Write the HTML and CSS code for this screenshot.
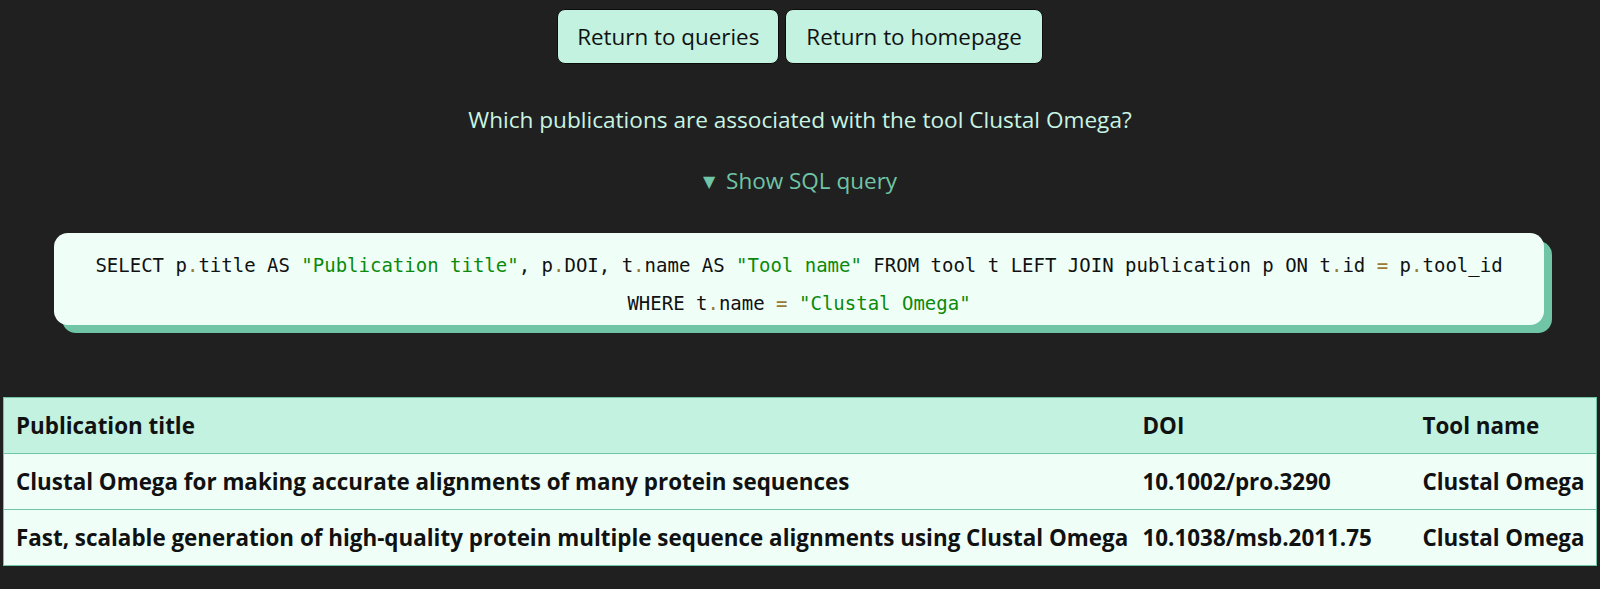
FILE: index.html
```html
<!DOCTYPE html>
<html lang="en">
<head>
<meta charset="utf-8">
<title>Query result</title>
<link rel="stylesheet" href="styles.css">
</head>
<body>
<main class="page">
  <nav class="actions">
    <button class="btn" type="button">Return to queries</button>
    <button class="btn" type="button">Return to homepage</button>
  </nav>
  <p class="question">Which publications are associated with the tool Clustal Omega?</p>
  <div class="toggle"><span class="tri">&#9660;</span> Show SQL query</div>
  <div class="sql">SELECT p<span class="op">.</span>title AS <span class="str">"Publication title"</span>, p<span class="op">.</span>DOI, t<span class="op">.</span>name AS <span class="str">"Tool name"</span> FROM tool t LEFT JOIN publication p ON t<span class="op">.</span>id <span class="op">=</span> p<span class="op">.</span>tool_id WHERE t<span class="op">.</span>name <span class="op">=</span> <span class="str">"Clustal Omega"</span></div>
  <div class="result">
    <table class="grid">
      <thead>
        <tr><th class="c-title">Publication title</th><th class="c-doi">DOI</th><th class="c-tool">Tool name</th></tr>
      </thead>
      <tbody>
        <tr><td>Clustal Omega for making accurate alignments of many protein sequences</td><td>10.1002/pro.3290</td><td>Clustal Omega</td></tr>
        <tr><td>Fast, scalable generation of high-quality protein multiple sequence alignments using Clustal Omega</td><td>10.1038/msb.2011.75</td><td>Clustal Omega</td></tr>
      </tbody>
    </table>
  </div>
</main>
</body>
</html>
```

FILE: styles.css
```css
html, body {
  margin: 0;
  padding: 0;
  background: #202020;
}
body {
  font-family: "Open Sans", "Noto Sans", sans-serif;
  color: #111;
}
.page {
  display: flex;
  flex-direction: column;
  padding-top: 9px;
}
.actions {
  display: flex;
  justify-content: center;
  gap: 6px;
}
.btn {
  box-sizing: border-box;
  height: 55px;
  padding: 0 19px;
  background: #c3f2e0;
  color: #111;
  border: 1px solid #0c0c0c;
  border-radius: 8px;
  font-family: "Open Sans", "Noto Sans", sans-serif;
  font-size: 22.4px;
}
.btn + .btn {
  padding: 0 20px;
}
.question {
  margin: 41px 0 0;
  text-align: center;
  color: #c8f4e3;
  font-size: 22.6px;
  line-height: 30px;
}
.toggle {
  margin-top: 31px;
  text-align: center;
  color: #6fc5a5;
  font-size: 22.5px;
  line-height: 30px;
}
.tri {
  font-family: "DejaVu Sans", sans-serif;
  font-size: 16px;
  vertical-align: 2px;
  margin-right: 5px;
}
.sql {
  margin: 36px 56px 0 54px;
  padding: 13px 24px 3px;
  background: #effff8;
  border-radius: 14px;
  box-shadow: 8px 8px 0 #6fc5a5;
  font-family: "DejaVu Sans Mono", "Liberation Mono", monospace;
  font-size: 19px;
  line-height: 38px;
  text-align: center;
  color: #111;
}
.str { color: #0b8a0b; }
.op { color: #9a7a30; }
.result {
  margin-top: 72px;
  padding: 0 3px 0 3px;
}
.grid {
  width: 100%;
  table-layout: fixed;
  border-collapse: collapse;
  border: 1px solid #6fc5a5;
  font-weight: 700;
  font-size: 22.4px;
}
.grid th, .grid td {
  text-align: left;
  padding: 0 4px 0 12px;
  height: 56px;
  white-space: nowrap;
  box-sizing: border-box;
  border-bottom: 1px solid #6fc5a5;
}
.grid th {
  background: #c3f2e0;
  font-weight: 700;
}
.grid td {
  background: #effff8;
}
.c-doi { width: 280px; }
.c-tool { width: 186px; }
```
